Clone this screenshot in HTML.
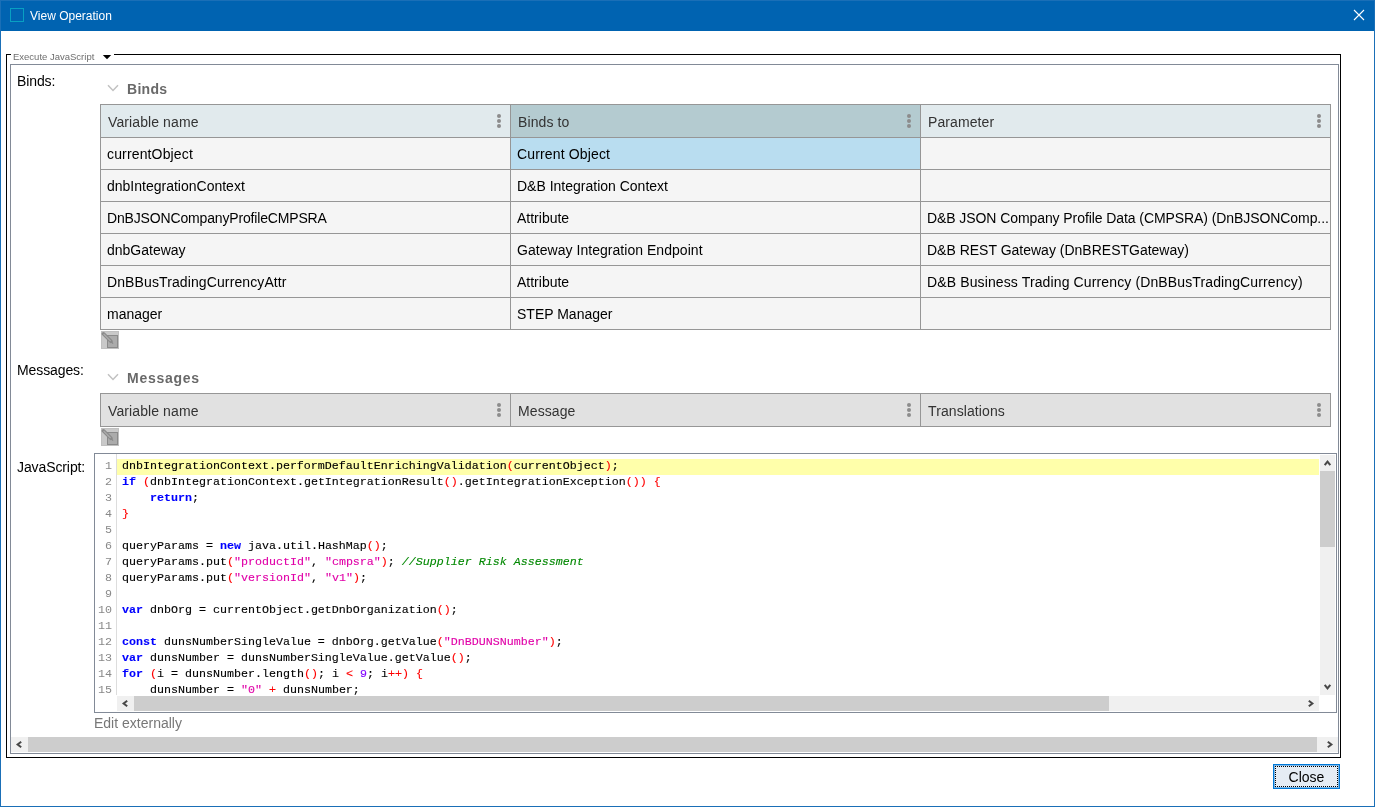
<!DOCTYPE html>
<html>
<head>
<meta charset="utf-8">
<title>View Operation</title>
<style>
html,body{margin:0;padding:0;}
body{width:1375px;height:807px;position:relative;overflow:hidden;background:#fff;will-change:transform;font-family:"Liberation Sans",sans-serif;font-size:14px;color:#000;}
.abs{position:absolute;}
#win{z-index:5;left:0;top:0;width:1373px;height:806px;border:1px solid #1a6fb7;border-top:none;box-sizing:content-box;}
#titlebar{left:0;top:0;width:1375px;height:31px;background:#0063b1;}
#titlebar .edge-t{left:0;top:0;width:1375px;height:1px;background:#1a6fb7;}
#ticon{left:10px;top:8px;width:12px;height:12px;border:1px solid #08a0c2;}
#ttext{left:30px;top:9px;font-size:12px;line-height:14px;color:#fff;white-space:nowrap;}
#fs-black{left:6px;top:54px;width:1333px;height:702px;border:1px solid #000;}
#fs-gray{left:10px;top:64px;width:1327px;height:688px;border:1px solid #828a97;}
#legend{left:11px;top:49px;height:12px;width:103px;background:#fff;}
#legend span{position:absolute;left:2px;top:2px;font-size:9.5px;line-height:12px;color:#6e6e6e;white-space:nowrap;}
.lbl{font-size:14px;line-height:16px;white-space:nowrap;color:#000;letter-spacing:-0.1px;}
.sect{font-size:14px;font-weight:bold;color:#696969;letter-spacing:0.28px;line-height:16px;white-space:nowrap;}
table.grid{position:absolute;border-collapse:collapse;table-layout:fixed;}
table.grid td,table.grid th{border:1px solid #969696;padding:0 0 0 7px;font-size:14px;font-weight:normal;text-align:left;white-space:nowrap;overflow:hidden;text-overflow:ellipsis;box-sizing:border-box;position:relative;}
table.grid th{height:33px;background:#e1eaed;color:#333;padding-top:2px;letter-spacing:0.1px;}
table.grid td{height:32px;background:#f5f5f5;color:#000;padding-left:6px;}
table.grid th.sel{background:#b4cbd0;}
table.grid td.sel{background:#b9ddf0;}
table.msg th{background:#e1e1e1;}
.dots{position:absolute;right:9px;top:9px;width:4px;height:14px;}
.dots i{display:block;width:4px;height:4px;border-radius:2px;background:#8c8c8c;margin-bottom:1px;}
.pen{width:18px;height:18px;background:#c9c9c9;}
#editor{left:94px;top:453px;width:1241px;height:258px;border:1px solid #828a97;background:#fff;overflow:hidden;}
#code{position:absolute;left:0;top:5px;width:1224px;font-family:"Liberation Mono",monospace;font-size:11.67px;line-height:16px;}
.ln{position:relative;height:16px;}
.ln .n{position:absolute;left:0;top:-1px;width:17px;text-align:right;color:#888;}
.ln .c{position:absolute;left:27px;top:-1px;white-space:pre;-webkit-text-stroke:0.12px currentColor;}
.ln.hl{background:linear-gradient(to right,transparent 0,transparent 22px,#ffffaa 22px);}
#gutline{left:21px;top:0;width:1px;height:241px;background:#ddd;}
.k{color:#0000ff;font-weight:bold;}
.p{color:#ff0000;}
.s{color:#e000a8;}
.cm{color:#008800;font-style:italic;}
.nu{color:#8000ff;}
.sb{background:#f0f0f0;}
.thumb{background:#cdcdcd;}
#btn{left:1273px;top:764px;width:65px;height:23px;border:1px solid #0078d7;background:#e5ecf4;box-shadow:inset 0 0 0 1px rgba(0,120,215,0.45);}
#btn .focus{position:absolute;left:1px;top:1px;right:1px;bottom:1px;border:1px dotted #000;}
#btn span{position:absolute;left:0;right:0;top:4px;text-align:center;font-size:14px;line-height:16px;}
</style>
</head>
<body>
<div id="win" class="abs"></div>
<div id="titlebar" class="abs">
  <div class="abs edge-t"></div>
  <div id="ticon" class="abs"></div>
  <div id="ttext" class="abs">View Operation</div>
  <svg class="abs" style="left:1353px;top:9px" width="12" height="12" viewBox="0 0 12 12"><path d="M1 1 L11 11 M11 1 L1 11" stroke="#fff" stroke-width="1.1" fill="none"/></svg>
</div>

<div id="fs-black" class="abs"></div>
<div id="legend" class="abs"><span>Execute JavaScript</span>
  <svg class="abs" style="left:91px;top:6px" width="10" height="6" viewBox="0 0 10 6"><path d="M0.8 0 L9.2 0 L5 4.2 Z" fill="#000"/></svg>
</div>
<div id="fs-gray" class="abs"></div>

<div class="abs lbl" style="left:17px;top:73px">Binds:</div>
<svg class="abs" style="left:107px;top:84px" width="12" height="8" viewBox="0 0 12 8"><path d="M1 1.2 L6 6.5 L11 1.2" stroke="#c2c2c2" stroke-width="1.5" fill="none"/></svg>
<div class="abs sect" style="left:127px;top:81px">Binds</div>

<table class="grid" style="left:100px;top:104px;width:1230px">
<colgroup><col style="width:410px"><col style="width:410px"><col style="width:410px"></colgroup>
<tr><th>Variable name<span class="dots"><i></i><i></i><i></i></span></th><th class="sel">Binds to<span class="dots"><i></i><i></i><i></i></span></th><th>Parameter<span class="dots"><i></i><i></i><i></i></span></th></tr>
<tr><td style="letter-spacing:0.15px">currentObject</td><td class="sel" style="letter-spacing:0.15px">Current Object</td><td></td></tr>
<tr><td>dnbIntegrationContext</td><td>D&amp;B Integration Context</td><td></td></tr>
<tr><td style="letter-spacing:-0.16px">DnBJSONCompanyProfileCMPSRA</td><td>Attribute</td><td style="letter-spacing:-0.08px;text-overflow:clip">D&amp;B JSON Company Profile Data (CMPSRA) (DnBJSONComp...</td></tr>
<tr><td>dnbGateway</td><td style="letter-spacing:0.04px">Gateway Integration Endpoint</td><td>D&amp;B REST Gateway (DnBRESTGateway)</td></tr>
<tr><td style="letter-spacing:0.11px">DnBBusTradingCurrencyAttr</td><td>Attribute</td><td style="letter-spacing:0.125px">D&amp;B Business Trading Currency (DnBBusTradingCurrency)</td></tr>
<tr><td>manager</td><td>STEP Manager</td><td></td></tr>
</table>
<div class="abs pen" style="left:101px;top:331px"><svg width="18" height="18" viewBox="0 0 18 18"><rect x="0.5" y="0.5" width="17" height="17" fill="none" stroke="#c0c0c0"/><rect x="6.5" y="4.5" width="10" height="12" fill="#ababab" stroke="#8a8a8a"/><path d="M2.4 2.8 L9.9 10.3" stroke="#8a8a8a" stroke-width="3.6" stroke-linecap="round"/><path d="M2.6 3 L9.6 10" stroke="#aaaaaa" stroke-width="1.3"/><path d="M10 10.4 L12 12.6" stroke="#8a8a8a" stroke-width="1.3"/></svg></div>

<div class="abs lbl" style="left:17px;top:362px">Messages:</div>
<svg class="abs" style="left:107px;top:373px" width="12" height="8" viewBox="0 0 12 8"><path d="M1 1.2 L6 6.5 L11 1.2" stroke="#c2c2c2" stroke-width="1.5" fill="none"/></svg>
<div class="abs sect" style="left:127px;top:370px;letter-spacing:0.74px">Messages</div>
<table class="grid msg" style="left:100px;top:393px;width:1230px">
<colgroup><col style="width:410px"><col style="width:410px"><col style="width:410px"></colgroup>
<tr><th>Variable name<span class="dots"><i></i><i></i><i></i></span></th><th>Message<span class="dots"><i></i><i></i><i></i></span></th><th>Translations<span class="dots"><i></i><i></i><i></i></span></th></tr>
</table>
<div class="abs pen" style="left:101px;top:428px"><svg width="18" height="18" viewBox="0 0 18 18"><rect x="0.5" y="0.5" width="17" height="17" fill="none" stroke="#c0c0c0"/><rect x="6.5" y="4.5" width="10" height="12" fill="#ababab" stroke="#8a8a8a"/><path d="M2.4 2.8 L9.9 10.3" stroke="#8a8a8a" stroke-width="3.6" stroke-linecap="round"/><path d="M2.6 3 L9.6 10" stroke="#aaaaaa" stroke-width="1.3"/><path d="M10 10.4 L12 12.6" stroke="#8a8a8a" stroke-width="1.3"/></svg></div>

<div class="abs lbl" style="left:17px;top:459px">JavaScript:</div>
<div id="editor" class="abs">
  <div id="gutline" class="abs"></div>
  <div id="code">
<div class="ln hl"><span class="n">1</span><span class="c">dnbIntegrationContext.performDefaultEnrichingValidation<span class="p">(</span>currentObject<span class="p">)</span>;</span></div>
<div class="ln"><span class="n">2</span><span class="c"><span class="k">if</span> <span class="p">(</span>dnbIntegrationContext.getIntegrationResult<span class="p">()</span>.getIntegrationException<span class="p">())</span> <span class="p">{</span></span></div>
<div class="ln"><span class="n">3</span><span class="c">    <span class="k">return</span>;</span></div>
<div class="ln"><span class="n">4</span><span class="c"><span class="p">}</span></span></div>
<div class="ln"><span class="n">5</span><span class="c"></span></div>
<div class="ln"><span class="n">6</span><span class="c">queryParams = <span class="k">new</span> java.util.HashMap<span class="p">()</span>;</span></div>
<div class="ln"><span class="n">7</span><span class="c">queryParams.put<span class="p">(</span><span class="s">"productId"</span>, <span class="s">"cmpsra"</span><span class="p">)</span>; <span class="cm">//Supplier Risk Assessment</span></span></div>
<div class="ln"><span class="n">8</span><span class="c">queryParams.put<span class="p">(</span><span class="s">"versionId"</span>, <span class="s">"v1"</span><span class="p">)</span>;</span></div>
<div class="ln"><span class="n">9</span><span class="c"></span></div>
<div class="ln"><span class="n">10</span><span class="c"><span class="k">var</span> dnbOrg = currentObject.getDnbOrganization<span class="p">()</span>;</span></div>
<div class="ln"><span class="n">11</span><span class="c"></span></div>
<div class="ln"><span class="n">12</span><span class="c"><span class="k">const</span> dunsNumberSingleValue = dnbOrg.getValue<span class="p">(</span><span class="s">"DnBDUNSNumber"</span><span class="p">)</span>;</span></div>
<div class="ln"><span class="n">13</span><span class="c"><span class="k">var</span> dunsNumber = dunsNumberSingleValue.getValue<span class="p">()</span>;</span></div>
<div class="ln"><span class="n">14</span><span class="c"><span class="k">for</span> <span class="p">(</span>i = dunsNumber.length<span class="p">()</span>; i <span class="p">&lt;</span> <span class="nu">9</span>; i<span class="p">++)</span> <span class="p">{</span></span></div>
<div class="ln"><span class="n">15</span><span class="c">    dunsNumber = <span class="s">"0"</span> <span class="p">+</span> dunsNumber;</span></div>
  </div>
</div>
<div class="abs" style="left:94px;top:715px;font-size:14px;line-height:16px;color:#777;white-space:nowrap">Edit externally</div>

<!-- editor vertical scrollbar -->
<div class="abs sb" style="left:1320px;top:455px;width:15px;height:240px"></div>
<div class="abs thumb" style="left:1320px;top:471px;width:15px;height:76px"></div>
<svg class="abs" style="left:1323px;top:459px" width="9" height="8" viewBox="0 0 9 8"><path d="M1.7 6.2 L4.5 2.6 L7.3 6.2" stroke="#484848" stroke-width="2" fill="none"/></svg>
<svg class="abs" style="left:1323px;top:683px" width="9" height="8" viewBox="0 0 9 8"><path d="M1.7 1.8 L4.5 5.4 L7.3 1.8" stroke="#484848" stroke-width="2" fill="none"/></svg>
<!-- editor horizontal scrollbar -->
<div class="abs sb" style="left:117px;top:696px;width:1202px;height:15px"></div>
<div class="abs thumb" style="left:134px;top:696px;width:975px;height:15px"></div>
<svg class="abs" style="left:121px;top:699px" width="8" height="9" viewBox="0 0 8 9"><path d="M6.2 1.7 L2.6 4.5 L6.2 7.3" stroke="#484848" stroke-width="2" fill="none"/></svg>
<svg class="abs" style="left:1307px;top:699px" width="8" height="9" viewBox="0 0 8 9"><path d="M1.8 1.7 L5.4 4.5 L1.8 7.3" stroke="#484848" stroke-width="2" fill="none"/></svg>
<!-- outer horizontal scrollbar -->
<div class="abs sb" style="left:11px;top:737px;width:1327px;height:15px"></div>
<div class="abs thumb" style="left:28px;top:737px;width:1289px;height:15px"></div>
<svg class="abs" style="left:15px;top:740px" width="8" height="9" viewBox="0 0 8 9"><path d="M6.2 1.7 L2.6 4.5 L6.2 7.3" stroke="#484848" stroke-width="2" fill="none"/></svg>
<svg class="abs" style="left:1326px;top:740px" width="8" height="9" viewBox="0 0 8 9"><path d="M1.8 1.7 L5.4 4.5 L1.8 7.3" stroke="#484848" stroke-width="2" fill="none"/></svg>

<div id="btn" class="abs"><div class="focus"></div><span>Close</span></div>
</body>
</html>
